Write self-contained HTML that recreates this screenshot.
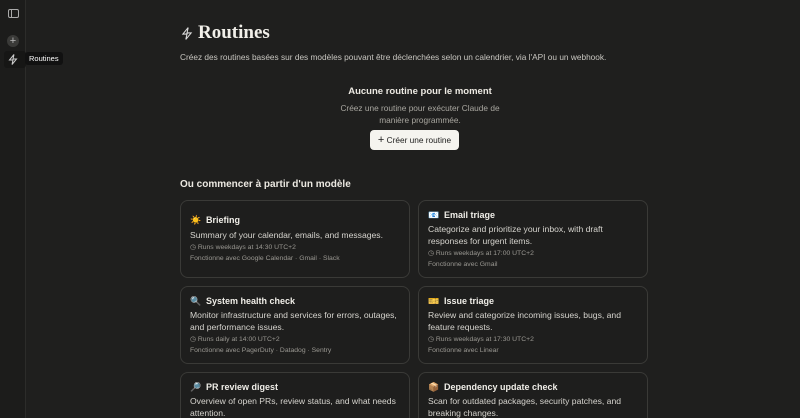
<!DOCTYPE html>
<html style="width:800px;height:418px;overflow:hidden"><head><meta charset="utf-8"><style>
*{margin:0;padding:0;box-sizing:border-box}
body{width:800px;height:418px;overflow:hidden;background:#1f1f1e;font-family:"Liberation Sans",sans-serif;color:#e8e6e0}
#w{position:relative;width:800px;height:418px;overflow:hidden}
.side{position:absolute;left:0;top:0;width:26px;height:418px;border-right:1px solid #2c2c2a;background:#1c1c1b}
.abs{position:absolute}
.card{position:absolute;width:230px;height:78px;border:1px solid #3a3a37;border-radius:8px;background:#1e1e1d}
.card .t{position:absolute;left:9px;top:9px;font-size:9px;font-weight:bold;color:#f0eee8}
.card .t span{display:inline-block;width:12px;margin-right:4px}
.card .d{position:absolute;left:9px;top:23px;width:208px;font-size:8.6px;line-height:11.5px;color:#d6d4ce}
.card .s{position:absolute;left:9px;top:48px;font-size:6.8px;color:#9a9892;line-height:10.5px}
.one .t{top:14px}.one .d{top:29px}.one .s{top:42px}
</style></head><body><div id="w">
<div class="side"></div>
<svg class="abs" style="left:8px;top:9px" width="11" height="9" viewBox="0 0 11 9"><rect x="0.5" y="0.5" width="10" height="8" rx="1.5" fill="none" stroke="#aaa"/><line x1="3.5" y1="1" x2="3.5" y2="8" stroke="#aaa"/></svg>
<div class="abs" style="left:7px;top:35px;width:12px;height:12px;border-radius:6px;background:#3a3a38;color:#bbb;font-size:11px;line-height:12px;text-align:center">+</div>
<div class="abs" style="left:4px;top:51px;width:22px;height:17px;background:#161615;border-radius:3px"></div>
<svg class="abs" style="left:8px;top:54px" width="10" height="11" viewBox="0 0 10 11"><path d="M6 0.5L1.5 6H5L4 10.5L8.5 5H5Z" fill="none" stroke="#ccc" stroke-width="1"/></svg>
<div class="abs" style="left:25px;top:52px;background:#111;border-radius:3px;padding:2px 4px;font-size:7.5px;color:#fff">Routines</div>

<svg class="abs" style="left:181px;top:27px" width="12" height="13" viewBox="0 0 10 11"><path d="M6 0.5L1.5 6H5L4 10.5L8.5 5H5Z" fill="none" stroke="#ddd" stroke-width="0.9"/></svg>
<div class="abs" style="left:198px;top:22px;font-family:'Liberation Serif',serif;font-size:19px;font-weight:bold;color:#f2f0ea">Routines</div>
<div class="abs" style="left:180px;top:52px;font-size:8.3px;color:#c8c6c0">Créez des routines basées sur des modèles pouvant être déclenchées selon un calendrier, via l'API ou un webhook.</div>

<div class="abs" style="left:300px;width:240px;top:86px;text-align:center;font-size:9.5px;font-weight:bold;color:#ece9e2">Aucune routine pour le moment</div>
<div class="abs" style="left:340px;width:160px;top:103px;text-align:center;font-size:8.3px;line-height:11.5px;color:#a9a7a0">Créez une routine pour exécuter Claude de manière programmée.</div>
<div class="abs" style="left:370px;top:130px;width:89px;height:20px;background:#f5f4ef;border-radius:4px;color:#1c1c1b;font-size:8.3px;line-height:20px;text-align:center"><span style="font-size:11px">+</span> Créer une routine</div>

<div class="abs" style="left:180px;top:179px;font-size:10px;font-weight:bold;color:#ece9e2">Ou commencer à partir d'un modèle</div>

<div class="card one" style="left:180px;top:200px"><div class="t"><span>☀️</span>Briefing</div><div class="d">Summary of your calendar, emails, and messages.</div><div class="s">◷ Runs weekdays at 14:30 UTC+2<br>Fonctionne avec Google Calendar · Gmail · Slack</div></div>
<div class="card" style="left:418px;top:200px"><div class="t"><span>📧</span>Email triage</div><div class="d">Categorize and prioritize your inbox, with draft responses for urgent items.</div><div class="s">◷ Runs weekdays at 17:00 UTC+2<br>Fonctionne avec Gmail</div></div>
<div class="card" style="left:180px;top:286px"><div class="t"><span>🔍</span>System health check</div><div class="d">Monitor infrastructure and services for errors, outages, and performance issues.</div><div class="s">◷ Runs daily at 14:00 UTC+2<br>Fonctionne avec PagerDuty · Datadog · Sentry</div></div>
<div class="card" style="left:418px;top:286px"><div class="t"><span>🎫</span>Issue triage</div><div class="d">Review and categorize incoming issues, bugs, and feature requests.</div><div class="s">◷ Runs weekdays at 17:30 UTC+2<br>Fonctionne avec Linear</div></div>
<div class="card" style="left:180px;top:372px;height:46px;border-bottom:none;border-radius:8px 8px 0 0"><div class="t"><span>🔎</span>PR review digest</div><div class="d">Overview of open PRs, review status, and what needs attention.</div></div>
<div class="card" style="left:418px;top:372px;height:46px;border-bottom:none;border-radius:8px 8px 0 0"><div class="t"><span>📦</span>Dependency update check</div><div class="d">Scan for outdated packages, security patches, and breaking changes.</div></div>
</div></body></html>
